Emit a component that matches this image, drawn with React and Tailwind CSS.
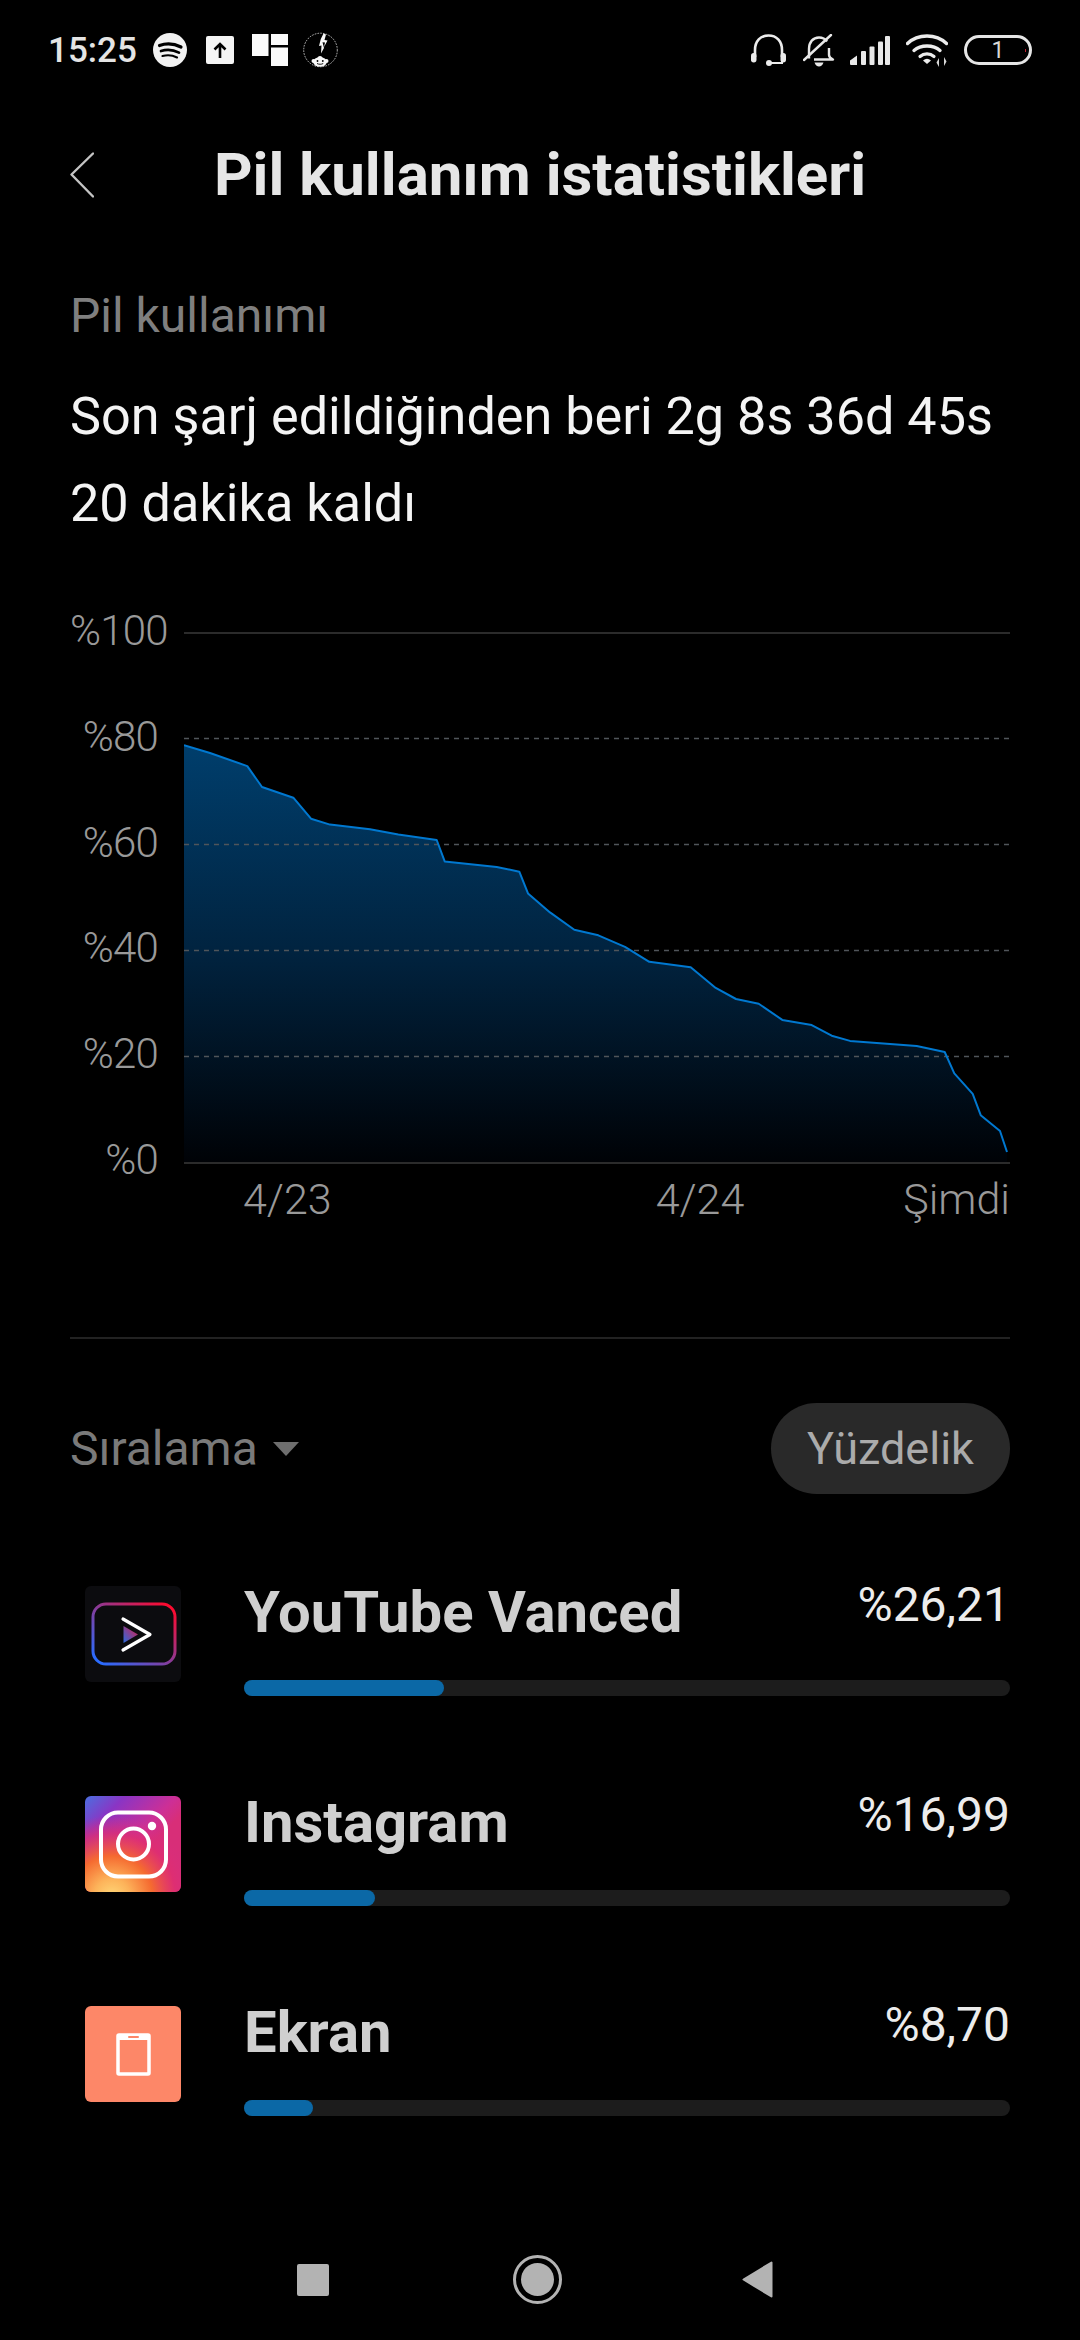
const LINE = [[184,745.1],[210,753],[247.3,766.1],[262,787],[293.3,797.7],[311,818.7],[330,824.6],[370,829.3],[398.3,834.5],[436.7,840],[444.7,861.4],[496.7,866.9],[519.3,871.7],[528,893.4],[550,912.4],[574.3,929.8],[598.3,935.3],[625,946.8],[649.3,961.8],[690.7,967.3],[715.7,987.9],[736,999],[758.7,1003.7],[782.3,1019.9],[811.7,1025.1],[831.7,1035.7],[850,1040.9],[916.7,1046],[944.7,1052],[954.3,1073.3],[972.7,1093.9],[980.7,1115.2],[1000,1131],[1007,1152]];
const linePts = LINE.map((p) => p.join(",")).join(" ");
const areaPts = `${linePts} 1007,1162 184,1162`;

function Spotify() {
  return (
    <svg width="34" height="34" viewBox="0 0 34 34" className="shrink-0">
      <circle cx="17" cy="17" r="17" fill="#f2f2f2" />
      <path d="M6.5 12.5C13 10.2 21.5 10.8 28 14" fill="none" stroke="#000" strokeWidth="3.2" strokeLinecap="round" />
      <path d="M8 18C13.5 16.3 20.5 16.8 26 19.6" fill="none" stroke="#000" strokeWidth="2.7" strokeLinecap="round" />
      <path d="M9.5 23C14 21.8 19.6 22.2 24 24.4" fill="none" stroke="#000" strokeWidth="2.2" strokeLinecap="round" />
    </svg>
  );
}
function Upload() {
  return (
    <svg width="28" height="28" viewBox="0 0 28 28" className="shrink-0">
      <rect width="28" height="28" rx="2" fill="#f4f4f4" />
      <path d="M14 22V8M8.5 13.5L14 8l5.5 5.5" fill="none" stroke="#000" strokeWidth="2.6" />
    </svg>
  );
}
function Tiles() {
  return (
    <svg width="36" height="32" viewBox="0 0 36 32" className="shrink-0">
      <rect x="0" y="0" width="16.5" height="22" fill="#fafafa" />
      <rect x="19" y="0" width="17" height="11" fill="#fafafa" />
      <rect x="19" y="13.5" width="17" height="18.5" fill="#fafafa" />
    </svg>
  );
}
function Flash() {
  return (
    <svg width="35" height="36" viewBox="0 0 35 36" className="shrink-0">
      <circle cx="17.5" cy="18" r="16.8" fill="none" stroke="#cfcfcf" strokeWidth="0.9" strokeDasharray="1.6 1.2" />
      <path d="M20.500 1.500L23 2.500 21.500 8l3 .5-3.500 6.500 1-4.500-2.500-.2L21 16l-3 5.500 .5-8-2.500.5 1.800-7z" fill="#f8f8f8" />
      <ellipse cx="17" cy="30" rx="6.800" ry="4.800" fill="#f8f8f8" />
      <circle cx="10.500" cy="29" r="2" fill="#f8f8f8" />
      <circle cx="23.500" cy="29" r="2" fill="#f8f8f8" />
      <circle cx="17" cy="26.500" r="2.500" fill="#f8f8f8" />
      <circle cx="14.500" cy="29" r="0.900" fill="#000" />
      <circle cx="19.800" cy="29" r="0.900" fill="#000" />
      <path d="M14 31.500c1.800 1 4.500 1 6.200 0" fill="none" stroke="#000" strokeWidth="0.900" />
    </svg>
  );
}
function Headset() {
  return (
    <svg width="35" height="32" viewBox="0 0 35 32" className="shrink-0">
      <path d="M4 23V16C4 7 9.500 1.500 17.500 1.500S31 7 31 16V23" fill="none" stroke="#ececec" strokeWidth="2.600" />
      <rect x="0" y="19" width="5.500" height="9.500" rx="2.700" fill="#ececec" />
      <rect x="29.500" y="19" width="5.500" height="9.500" rx="2.700" fill="#ececec" />
      <circle cx="18" cy="29" r="3" fill="#ececec" />
      <path d="M18 29H31V26" fill="none" stroke="#ececec" strokeWidth="2" />
    </svg>
  );
}
function Bell() {
  return (
    <svg width="32" height="33" viewBox="0 0 32 33" className="shrink-0">
      <path d="M6 24.500V15C6 8 10 3.500 16 3.500c3.500 0 6.300 1.500 8 4M26 14v7c0 2 2 3.500 4 4.500H11" fill="none" stroke="#e8e8e8" strokeWidth="2.400" strokeLinejoin="round" />
      <path d="M1 26L28 1" stroke="#e8e8e8" strokeWidth="2.400" strokeLinecap="round" />
      <path d="M11.500 28.500h9c-.8 2.800-2.600 4-4.500 4s-3.700-1.200-4.500-4z" fill="#e8e8e8" />
    </svg>
  );
}
function Signal() {
  return (
    <svg width="40" height="29" viewBox="0 0 40 29" className="shrink-0">
      <path d="M0 24.500L7 19.500V29H1a1 1 0 0 1-1-1z" fill="#e8e8e8" />
      <rect x="11" y="15" width="5" height="14" rx="1" fill="#e8e8e8" />
      <rect x="19.500" y="10.500" width="5" height="18.500" rx="1" fill="#e8e8e8" />
      <rect x="28" y="5.500" width="5" height="23.500" rx="1" fill="#e8e8e8" />
      <rect x="35" y="0" width="5" height="29" rx="1" fill="#e8e8e8" />
    </svg>
  );
}
function Wifi() {
  return (
    <svg width="42" height="33" viewBox="0 0 42 33" className="shrink-0">
      <path d="M1.500 9.500C12 -0.500 30 -0.500 40.500 9.500" fill="none" stroke="#ececec" strokeWidth="3.400" strokeLinecap="round" />
      <path d="M8 16.500C14.800 10.500 27.200 10.500 34 16.500" fill="none" stroke="#ececec" strokeWidth="3.400" strokeLinecap="round" />
      <path d="M14 22.500C18 19 24 19 28 22.500" fill="none" stroke="#ececec" strokeWidth="3.200" strokeLinecap="round" />
      <path d="M17 26.500Q21 23 25 26.500L21 30z" fill="#ececec" />
      <path d="M33 33V24L30.500 28.500z" fill="#d8d8d8" />
      <path d="M38 23V32L40.500 27.500z" fill="#d8d8d8" />
    </svg>
  );
}
function Battery() {
  return (
    <div className="relative flex h-[30px] w-[68px] shrink-0 items-center justify-center rounded-full border-[3px] border-[#e6e6e6] text-[23px] leading-none font-normal text-[#d8d8d8]">
      1
      <span className="absolute top-[11px] right-[3px] h-[3px] w-[1px] bg-[#c02030]" />
    </div>
  );
}

function VancedIcon() {
  return (
    <svg width="96" height="96" viewBox="0 0 96 96" className="shrink-0">
      <defs>
        <linearGradient id="vb" x1="0.05" y1="0.95" x2="0.95" y2="0.05">
          <stop offset="0" stopColor="#2a6cff" />
          <stop offset="0.5" stopColor="#8a3a96" />
          <stop offset="1" stopColor="#ff0a2e" />
        </linearGradient>
        <linearGradient id="vt" x1="0" y1="1" x2="1" y2="0">
          <stop offset="0" stopColor="#2a6ce0" />
          <stop offset="1" stopColor="#e01a4a" />
        </linearGradient>
      </defs>
      <rect width="96" height="96" rx="6" fill="#0c0c0f" />
      <rect x="8" y="18" width="82" height="60" rx="13" fill="none" stroke="url(#vb)" strokeWidth="3" />
      <path d="M38.500 40L53 48.500 38.500 57z" fill="url(#vt)" />
      <path d="M38 33L65 48.500 38 64" fill="none" stroke="#fff" strokeWidth="3.200" strokeLinecap="round" strokeLinejoin="round" />
    </svg>
  );
}
function InstaIcon() {
  return (
    <svg width="96" height="96" viewBox="0 0 96 96" className="shrink-0">
      <defs>
        <linearGradient id="ib" x1="0" y1="0" x2="0.6" y2="0.6">
          <stop offset="0" stopColor="#4a6fe0" />
          <stop offset="0.35" stopColor="#8a35c4" />
          <stop offset="0.8" stopColor="#cd2f96" />
          <stop offset="1" stopColor="#d82e78" />
        </linearGradient>
        <radialGradient id="ir" cx="0.28" cy="1.05" r="0.85">
          <stop offset="0" stopColor="#ffd878" />
          <stop offset="0.22" stopColor="#fdb35a" />
          <stop offset="0.5" stopColor="#f56a30" />
          <stop offset="0.78" stopColor="#e02e70" stopOpacity="0.75" />
          <stop offset="1" stopColor="#d82e80" stopOpacity="0" />
        </radialGradient>
      </defs>
      <rect width="96" height="96" rx="6" fill="url(#ib)" />
      <rect width="96" height="96" rx="6" fill="url(#ir)" />
      <rect x="16" y="16.500" width="65" height="64" rx="17" fill="none" stroke="#fff" strokeWidth="4" />
      <circle cx="48.500" cy="48" r="15.500" fill="none" stroke="#fff" strokeWidth="4" />
      <circle cx="67" cy="30" r="4.200" fill="#fff" />
    </svg>
  );
}
function ScreenIcon() {
  return (
    <svg width="96" height="96" viewBox="0 0 96 96" className="shrink-0">
      <rect width="96" height="96" rx="6" fill="#fd8768" />
      <rect x="33" y="29" width="31" height="39" rx="1" fill="none" stroke="#fff" strokeWidth="3.500" />
      <rect x="33" y="28" width="31" height="6" fill="#fff" />
      <rect x="43" y="30" width="11" height="2" rx="1" fill="#fd8768" />
    </svg>
  );
}

const APPS = [
  { name: "YouTube Vanced", pct: "%26,21", fill: "w-[200px]", Icon: VancedIcon },
  { name: "Instagram", pct: "%16,99", fill: "w-[131px]", Icon: InstaIcon },
  { name: "Ekran", pct: "%8,70", fill: "w-[69px]", Icon: ScreenIcon },
];

export default function App() {
  return (
    <div className="flex min-h-[2340px] w-[1080px] flex-col bg-black font-['Roboto',sans-serif]">
      <div className="flex h-[100px] items-center justify-between pr-[48px] pl-[48px]">
        <div className="flex items-center">
          <span className="w-[87px] text-[35px] leading-none font-medium text-[#e4e4e4]">15:25</span>
          <span className="ml-[18px] flex"><Spotify /></span>
          <span className="ml-[19px] flex"><Upload /></span>
          <span className="ml-[18px] flex"><Tiles /></span>
          <span className="ml-[15px] flex"><Flash /></span>
        </div>
        <div className="flex items-center">
          <Headset />
          <span className="ml-[17px] flex"><Bell /></span>
          <span className="ml-[15px] flex"><Signal /></span>
          <span className="ml-[16px] flex"><Wifi /></span>
          <span className="ml-[16px] flex"><Battery /></span>
        </div>
      </div>

      <div className="grid h-[150px] grid-cols-[1fr_auto_1fr] items-center px-[70px]">
        <svg width="24" height="46" viewBox="0 0 24 46" className="block">
          <path d="M23 1.500L1.500 22.500 23 44.500" fill="none" stroke="#c4c4c4" strokeWidth="2.400" strokeLinecap="round" strokeLinejoin="round" />
        </svg>
        <h1 className="text-[60px] leading-none font-bold text-[#e6e6e6]">Pil kullanım istatistikleri</h1>
        <span />
      </div>

      <p className="mt-[36px] px-[70px] text-[48px] leading-[60px] text-[#7f7f7f]">Pil kullanımı</p>
      <p className="mt-[28px] px-[70px] text-[52.2px] leading-[86.5px] text-[#f4f4f4]">
        Son şarj edildiğinden beri 2g 8s 36d 45s
        <br />
        20 dakika kaldı
      </p>

      <div className="mt-[68px] flex h-[561px] px-[70px]">
        <div className="flex w-[88px] flex-col justify-between text-right text-[42px] leading-[32px] font-light tracking-[-0.8px] text-[#999999]">
          <span>%100</span>
          <span>%80</span>
          <span>%60</span>
          <span>%40</span>
          <span>%20</span>
          <span>%0</span>
        </div>
        <svg width="826" height="540" viewBox="184 628 826 540" className="mt-[13px] ml-[26px] block">
          <defs>
            <linearGradient id="area" gradientUnits="userSpaceOnUse" x1="0" y1="745" x2="0" y2="1162">
              <stop offset="0" stopColor="#003e6c" />
              <stop offset="0.5" stopColor="#01233f" />
              <stop offset="1" stopColor="#000206" />
            </linearGradient>
          </defs>
          <polygon points={areaPts} fill="url(#area)" />
          <line x1="184" x2="1010" y1="633" y2="633" stroke="#2b2b2b" strokeWidth="2" />
          <line x1="184" x2="1010" y1="1163" y2="1163" stroke="#2b2b2b" strokeWidth="2" />
          {[738.5, 844.5, 950.5, 1056.5].map((y) => (
            <line key={y} x1="184" x2="1010" y1={y} y2={y} stroke="#50555a" strokeWidth="1.300" strokeDasharray="5 5" />
          ))}
          <polyline points={linePts} fill="none" stroke="#0078d0" strokeWidth="2" strokeLinejoin="round" />
        </svg>
      </div>

      <div className="flex pr-[70px] pl-[243px] text-[43px] leading-[46px] font-light text-[#999999]">
        <span>4/23</span>
        <span className="ml-[324px]">4/24</span>
        <span className="ml-auto">Şimdi</span>
      </div>

      <div className="mx-[70px] mt-[115px] h-[2px] bg-[#222222]" />

      <div className="mt-[64px] flex h-[91px] items-center justify-between px-[70px]">
        <div className="flex items-center">
          <span className="text-[48px] leading-none text-[#7a7a7a]">Sıralama</span>
          <svg width="26" height="14" viewBox="0 0 26 14" className="ml-[15px]">
            <path d="M0 0H26L13 14z" fill="#6e6e6e" />
          </svg>
        </div>
        <div className="flex h-[91px] w-[239px] items-center justify-center rounded-full bg-[#292929] text-[45px] leading-none text-[#ababab]">
          Yüzdelik
        </div>
      </div>

      <div className="mt-[92px] flex flex-col px-[70px]">
        {APPS.map(({ name, pct, fill, Icon }) => (
          <div key={name} className="flex h-[210px] pl-[15px]">
            <Icon />
            <div className="ml-[63px] flex-1">
              <div className="flex h-[52px] items-start justify-between">
                <span className="text-[58px] leading-[52px] font-bold text-[#cfcfcf]">{name}</span>
                <span className="text-[48px] leading-[38px] text-[#ececec]">{pct}</span>
              </div>
              <div className="mt-[42px] h-[16px] rounded-full bg-[#1c1c1c]">
                <div className={`h-full rounded-full bg-[#0b68a6] ${fill}`} />
              </div>
            </div>
          </div>
        ))}
      </div>

      <div className="mt-[39px] flex items-center pl-[297px]">
        <div className="h-[32px] w-[32px] rounded-[2px] bg-[#b3b3b3]" />
        <div className="ml-[184px] flex h-[49px] w-[49px] items-center justify-center rounded-full border-[3px] border-[#b3b3b3]">
          <div className="h-[33px] w-[33px] rounded-full bg-[#b3b3b3]" />
        </div>
        <svg width="31" height="37" viewBox="0 0 31 37" className="ml-[180px]">
          <path d="M29.500 1.500V35.500L1.500 18.500z" fill="#b3b3b3" stroke="#b3b3b3" strokeWidth="2" strokeLinejoin="round" />
        </svg>
      </div>
    </div>
  );
}
